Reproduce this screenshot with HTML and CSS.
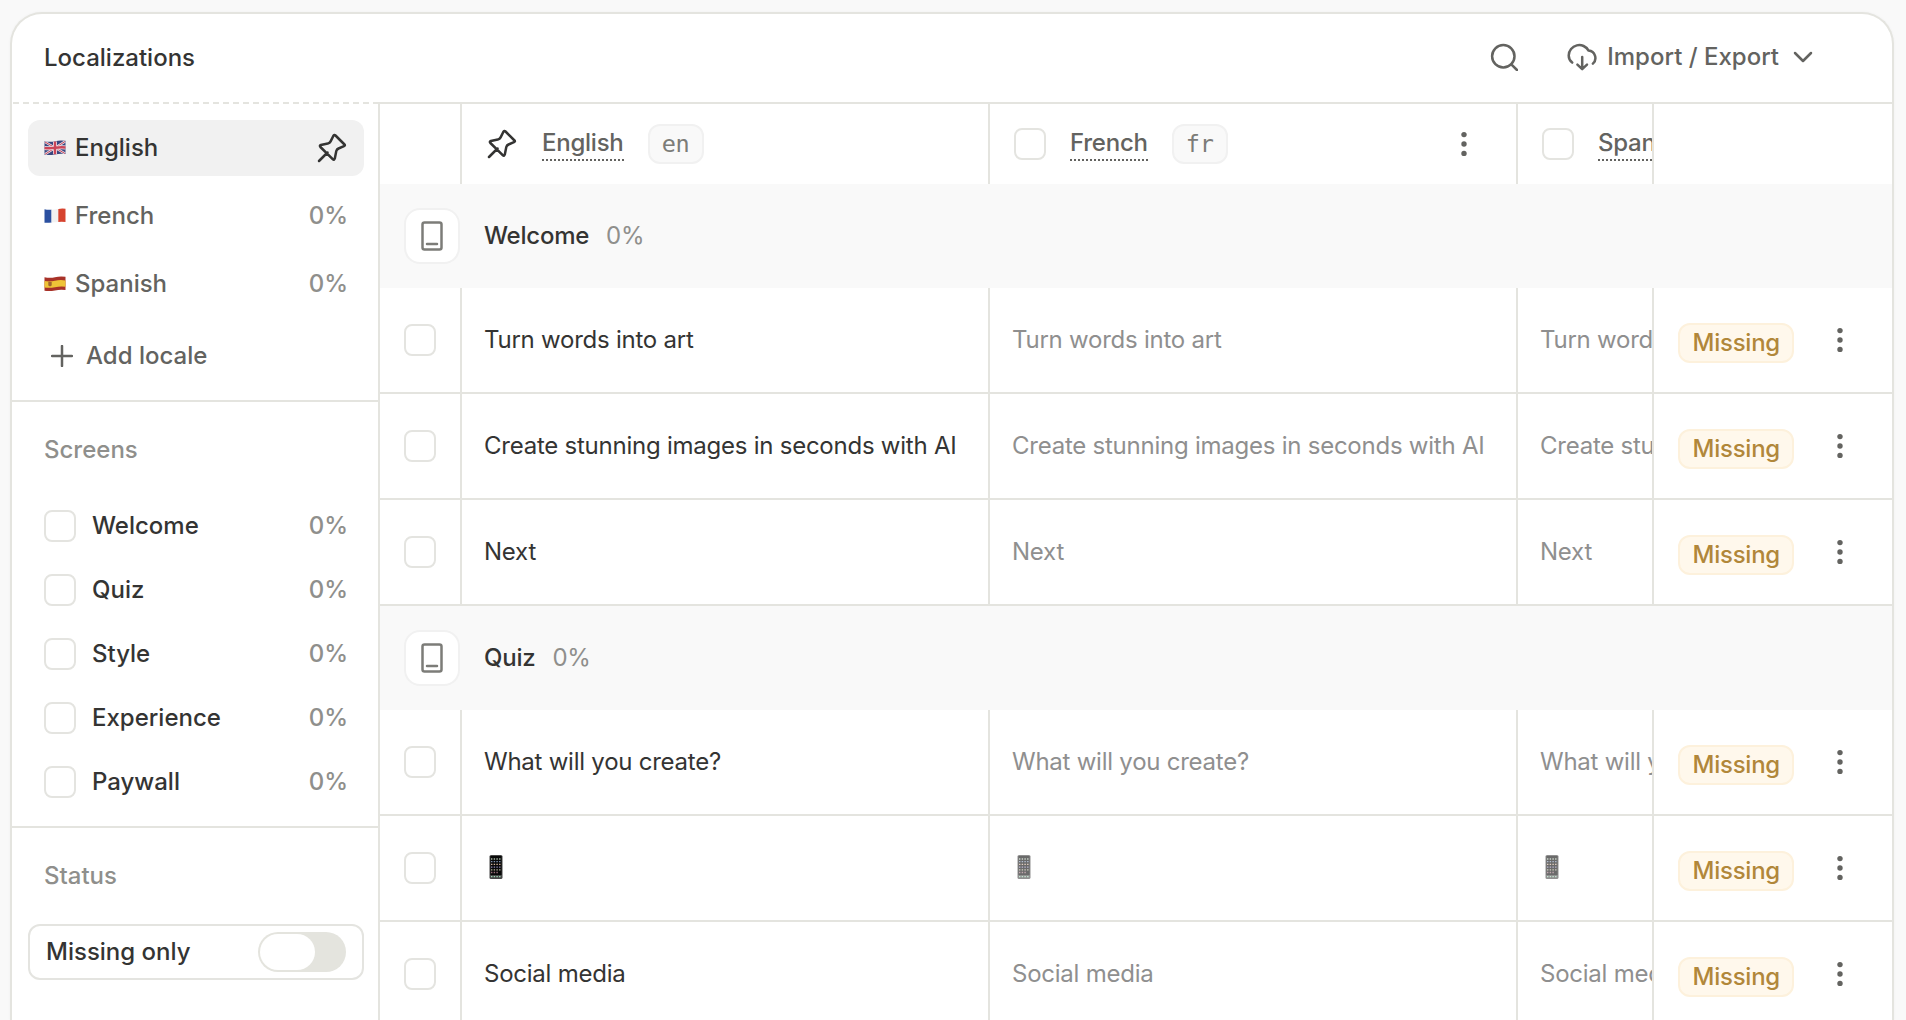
FILE: index.html
```html
<!DOCTYPE html>
<html lang="en">
<head>
<meta charset="UTF-8" />
<meta name="viewport" content="width=device-width, initial-scale=1" />
<title>Localizations</title>
<link rel="stylesheet" href="styles.css">
</head>
<body>

<!-- icons used more than once -->
<svg class="sprite">
  <symbol id="pin" viewBox="0 0 30 30">
    <path d="M2 28 L10.5 19.5 M18.5 2.5 L27.5 11.5 Q28.5 12.5 27 13.2 L21.5 15.5 Q19.8 16.3 19.3 18 L17.8 25.5 Q17.2 27.6 15.7 26.1 L3.4 14 Q2.2 12.6 3.8 12 L10.8 10.6 Q12.8 10.1 13.6 8.4 L16.3 3 Q17.3 1.3 18.5 2.5 Z"/>
  </symbol>
  <symbol id="device" viewBox="0 0 22 30">
    <rect x="1.5" y="1.5" width="19" height="27" rx="2"/>
    <path d="M6 23h10"/>
  </symbol>
  <symbol id="dots" viewBox="0 0 6 26">
    <circle cx="3" cy="3.6" r="2.7"/><circle cx="3" cy="13" r="2.7"/><circle cx="3" cy="22.4" r="2.7"/>
  </symbol>
  <symbol id="phone" viewBox="0 0 14 24">
    <rect x="0.5" y="0" width="13" height="24" rx="1.6" fill="#474747"/>
    <rect x="1.4" y="1" width="11.2" height="19" fill="#080808"/>
    <g fill="none" stroke-width="1.3" stroke-dasharray="1.4 1.3">
      <path d="M2 4h10" stroke="#a8b9a6"/>
      <path d="M2 6.7h10" stroke="#7f93b4"/>
      <path d="M2 9.4h10" stroke="#d5b49c"/>
      <path d="M2 12.1h10" stroke="#8d86b5"/>
      <path d="M2 14.8h10" stroke="#b5b49a"/>
      <path d="M2 17.5h7.5" stroke="#9c6f7d"/>
      <path d="M2 21.7h10" stroke="#9fd7b5"/>
    </g>
  </symbol>
</svg>

<div class="panel">
  <header class="topbar">
    <h1>Localizations</h1>
    <div class="actions">
      <button class="search">
        <svg class="icon" width="28" height="28" viewBox="0 0 28 28"><circle cx="13.3" cy="13.2" r="11.2"/><path d="M21.3 21.3 L27 27"/></svg>
      </button>
      <button class="export">
        <svg class="icon" width="30" height="28" viewBox="0 0 30 28">
          <path d="M5.2 19.6 A9 9 0 0 1 1.7 12.4 A10.6 10.6 0 0 1 21.6 7.6 A7.5 7.5 0 0 1 25.9 20.6"/>
          <path d="M15.2 14v11.5 M10.4 21.6l4.8 4.6 4.8-4.6"/>
        </svg>
        Import / Export
        <svg class="icon chevron" width="20" height="12" viewBox="0 0 20 12"><path d="M2 2l8 8 8-8"/></svg>
      </button>
    </div>
  </header>

  <div class="content">
    <aside class="sidebar">
      <section class="locales">
        <div class="locale selected">
          <svg class="flag" width="22" height="16" viewBox="0 0 22 16">
            <path d="M0.5 1.2Q6 2.4 11 1.2T21.5 0.8V14Q16 13.4 11 14.4T0.5 14.8Z" fill="#39467f"/>
            <path d="M1 2L21 13.5M21 1.5L1 14.3" stroke="#e6e3ea" stroke-width="2.4"/>
            <path d="M1 2L21 13.5M21 1.5L1 14.3" stroke="#c9455a" stroke-width="1"/>
            <path d="M11 1.4V14.3M0.5 8Q6 8.6 11 7.8T21.5 7.4" stroke="#efeaef" stroke-width="4" fill="none"/>
            <path d="M11 1.4V14.3M0.5 8Q6 8.6 11 7.8T21.5 7.4" stroke="#cb4558" stroke-width="2.5" fill="none"/>
          </svg>
          <span class="name">English</span>
          <svg class="icon pin" width="30" height="30"><use href="#pin"/></svg>
        </div>
        <div class="locale">
          <svg class="flag" width="22" height="16" viewBox="0 0 22 16">
            <path d="M0.5 1.2Q4 2.2 7.6 1.7V14.6Q4 15 0.5 14.8Z" fill="#2b50a0"/>
            <path d="M7.5 1.7Q11 1.4 14.3 0.9V13.9Q11 14.2 7.5 14.6Z" fill="#f1f1f1"/>
            <path d="M14.3 0.9Q18 0.4 21.5 0.8V14Q18 13.5 14.3 13.9Z" fill="#d6432f"/>
          </svg>
          <span class="name">French</span>
          <span class="percent">0%</span>
        </div>
        <div class="locale">
          <svg class="flag" width="22" height="16" viewBox="0 0 22 16">
            <path d="M0.5 1.2Q6 2.4 11 1.2T21.5 0.8V14Q16 13.4 11 14.4T0.5 14.8Z" fill="#a83228"/>
            <path d="M0.5 5Q6 6 11 4.8T21.5 4.5V10.8Q16 10.2 11 11.2T0.5 11.6Z" fill="#efc437"/>
            <path d="M4.3 6h3.4v3.6q-1.7 1.6-3.4 0z" fill="#a2662f"/>
          </svg>
          <span class="name">Spanish</span>
          <span class="percent">0%</span>
        </div>
        <button class="add-locale">
          <svg class="icon" width="22" height="22" viewBox="0 0 22 22"><path d="M11 1v20M1 11h20"/></svg>
          Add locale
        </button>
      </section>

      <section class="screens">
        <h2>Screens</h2>
        <div class="screen"><span class="checkbox"></span><span class="name">Welcome</span><span class="percent">0%</span></div>
        <div class="screen"><span class="checkbox"></span><span class="name">Quiz</span><span class="percent">0%</span></div>
        <div class="screen"><span class="checkbox"></span><span class="name">Style</span><span class="percent">0%</span></div>
        <div class="screen"><span class="checkbox"></span><span class="name">Experience</span><span class="percent">0%</span></div>
        <div class="screen"><span class="checkbox"></span><span class="name">Paywall</span><span class="percent">0%</span></div>
      </section>

      <section class="status">
        <h2>Status</h2>
        <div class="missing-only">
          <span class="name">Missing only</span>
          <span class="toggle"><span class="knob"></span></span>
        </div>
      </section>
    </aside>

    <main class="table">
      <div class="row head">
        <div class="cell"></div>
        <div class="cell">
          <svg class="icon pin" width="30" height="30"><use href="#pin"/></svg>
          <span class="lang">English</span><span class="code">en</span>
        </div>
        <div class="cell">
          <span class="checkbox"></span>
          <span class="lang">French</span><span class="code">fr</span>
          <svg class="dots" width="6" height="26"><use href="#dots"/></svg>
        </div>
        <div class="cell last">
          <span class="checkbox"></span>
          <span class="lang">Spanish</span>
        </div>
        <div class="cell side"></div>
      </div>

      <div class="group">
        <span class="device"><svg class="icon" width="22" height="30"><use href="#device"/></svg></span>
        <strong>Welcome</strong><span class="percent">0%</span>
      </div>
      <div class="row">
        <div class="cell"><span class="checkbox"></span></div>
        <div class="cell source">Turn words into art</div>
        <div class="cell">Turn words into art</div>
        <div class="cell last">Turn words into art</div>
        <div class="cell side"><span class="badge">Missing</span><svg class="dots" width="6" height="26"><use href="#dots"/></svg></div>
      </div>
      <div class="row">
        <div class="cell"><span class="checkbox"></span></div>
        <div class="cell source">Create stunning images in seconds with AI</div>
        <div class="cell">Create stunning images in seconds with AI</div>
        <div class="cell last">Create stunning images in seconds with AI</div>
        <div class="cell side"><span class="badge">Missing</span><svg class="dots" width="6" height="26"><use href="#dots"/></svg></div>
      </div>
      <div class="row">
        <div class="cell"><span class="checkbox"></span></div>
        <div class="cell source">Next</div>
        <div class="cell">Next</div>
        <div class="cell last">Next</div>
        <div class="cell side"><span class="badge">Missing</span><svg class="dots" width="6" height="26"><use href="#dots"/></svg></div>
      </div>

      <div class="group">
        <span class="device"><svg class="icon" width="22" height="30"><use href="#device"/></svg></span>
        <strong>Quiz</strong><span class="percent">0%</span>
      </div>
      <div class="row">
        <div class="cell"><span class="checkbox"></span></div>
        <div class="cell source">What will you create?</div>
        <div class="cell">What will you create?</div>
        <div class="cell last">What will you create?</div>
        <div class="cell side"><span class="badge">Missing</span><svg class="dots" width="6" height="26"><use href="#dots"/></svg></div>
      </div>
      <div class="row">
        <div class="cell"><span class="checkbox"></span></div>
        <div class="cell source"><svg class="phone" width="14" height="24"><use href="#phone"/></svg></div>
        <div class="cell"><svg class="phone" width="14" height="24"><use href="#phone"/></svg></div>
        <div class="cell last"><svg class="phone" width="14" height="24"><use href="#phone"/></svg></div>
        <div class="cell side"><span class="badge">Missing</span><svg class="dots" width="6" height="26"><use href="#dots"/></svg></div>
      </div>
      <div class="row">
        <div class="cell"><span class="checkbox"></span></div>
        <div class="cell source">Social media</div>
        <div class="cell">Social media</div>
        <div class="cell last">Social media</div>
        <div class="cell side"><span class="badge">Missing</span><svg class="dots" width="6" height="26"><use href="#dots"/></svg></div>
      </div>
    </main>
  </div>
</div>

</body>
</html>
```

FILE: styles.css
```css
* {
  box-sizing: border-box;
}
body {
  margin: 0;
  padding: 12px 12px 0 10px;
  height: 100vh;
  overflow: hidden;
  background: #f9f9f9;
  color: #343433;
  font-family: Inter, "Liberation Sans", sans-serif;
  font-size: 24px;
  line-height: 32px;
}
h1, h2 {
  margin: 0;
  font-size: 24px;
  font-weight: 500;
}
h2 {
  color: #8f8f8c;
}
button {
  display: flex;
  align-items: center;
  padding: 0;
  border: none;
  background: none;
  color: #636360;
  font: inherit;
  font-weight: 500;
  cursor: pointer;
}
.sprite {
  display: none;
}
.icon {
  flex: none;
  fill: none;
  stroke: currentColor;
  stroke-width: 2.5;
  stroke-linecap: round;
  stroke-linejoin: round;
}
.pin {
  color: #343433;
}
.dots {
  flex: none;
  fill: #636360;
}
.percent {
  color: #8f8f8c;
}
.checkbox {
  flex: none;
  width: 32px;
  height: 32px;
  border: 2px solid #e4e4e0;
  border-radius: 8px;
  background: #fff;
}

.panel {
  height: 100%;
  border: 2px solid #e4e4df;
  border-bottom: none;
  border-radius: 32px 32px 0 0;
  background: #fff;
  box-shadow: 0 0 3px rgba(0, 0, 0, 0.04);
  overflow: hidden;
}

/* Top bar */
.topbar {
  display: flex;
  align-items: center;
  justify-content: space-between;
  height: 88px;
  padding: 0 79px 0 32px;
}
.actions {
  display: flex;
  align-items: center;
  gap: 49px;
  padding-bottom: 3px;
}
.export {
  gap: 10px;
}
.export .chevron {
  margin-left: 4px;
}

.content {
  display: flex;
}

/* Sidebar */
.sidebar {
  flex: none;
  width: 368px;
  height: 918px;
  border-right: 2px solid #e4e4df;
  font-weight: 500;
}
.sidebar section {
  padding: 0 14px 0 16px;
  border-bottom: 2px solid #e4e4df;
}
.sidebar .name {
  flex: 1;
}
.sidebar .locales {
  height: 300px;
  padding-top: 18px;
  background: repeating-linear-gradient(90deg, #e4e4df 0 6px, #fff 6px 10px) 1px 0 / 100% 2px no-repeat;
}
.locale {
  display: flex;
  align-items: center;
  height: 56px;
  margin-bottom: 12px;
  padding: 0 17px 0 16px;
  border-radius: 12px;
  color: #636360;
}
.locale.selected {
  background: #f1f1f1;
  color: #343433;
}
.flag {
  margin-right: 9px;
}
.locale .percent {
  margin-right: -1px;
}
.add-locale {
  gap: 13px;
  height: 56px;
  margin-top: 16px;
  padding-left: 23px;
}
.sidebar .screens {
  height: 426px;
  padding-top: 32px;
}
.sidebar h2 {
  padding-left: 16px;
}
.screens h2 {
  margin-bottom: 28px;
}
.screen {
  display: flex;
  align-items: center;
  gap: 16px;
  height: 64px;
  padding: 0 16px;
}
.sidebar .status {
  padding-top: 32px;
  border-bottom: none;
}
.missing-only {
  display: flex;
  align-items: center;
  height: 56px;
  margin-top: 32px;
  padding: 0 16px;
  border: 2px solid #e4e4e0;
  border-radius: 12px;
}
.toggle {
  width: 88px;
  height: 40px;
  padding: 2px;
  border-radius: 20px;
  background: #e4e4de;
}
.knob {
  display: block;
  width: 55px;
  height: 36px;
  border-radius: 18px;
  background: #fff;
}

/* Table */
.table {
  flex: 1;
  border-top: 2px solid #e4e4df;
  letter-spacing: -0.01em;
}
.row {
  display: grid;
  grid-template-columns: 82px 528px 528px 134px 240px;
  height: 106px;
  border-bottom: 2px solid #e4e4df;
  color: #8f8f8f;
}
.cell {
  display: flex;
  align-items: center;
  padding: 0 22px;
  border-right: 2px solid #e4e4df;
  white-space: nowrap;
  overflow: hidden;
}
.cell:first-child {
  padding-left: 24px;
}
.cell.last {
  border-right: none;
}
.cell.side {
  border-right: none;
  border-left: 2px solid #e4e4df;
  padding: 0 49px 0 24px;
  justify-content: space-between;
}
.source {
  color: #343433;
}
.badge {
  height: 40px;
  margin-top: 6px;
  padding: 0 12.5px;
  border: 2px solid #fdf1dc;
  border-radius: 12px;
  background: #fff8ec;
  color: #b1873a;
  font-weight: 500;
  line-height: 36px;
}
.phone {
  margin: 0 0 2px 5px;
}
.cell:not(.source) .phone {
  opacity: 0.6;
}

.head {
  height: 80px;
  border-bottom: none;
  color: #636360;
  font-weight: 500;
}
.head .cell {
  padding-left: 24px;
}
.head .pin {
  margin: 0 1px;
}
.lang {
  margin-left: 24px;
  border-bottom: 2px dotted #636360;
}
.code {
  width: 56px;
  height: 40px;
  margin-left: 24px;
  border: 2px solid #f1f1f1;
  border-radius: 12px;
  background: #f9f9f9;
  color: #7c7c78;
  font-family: "DejaVu Sans Mono", monospace;
  font-size: 23.5px;
  font-weight: 400;
  line-height: 36px;
  text-align: center;
}
.head .dots {
  margin: 0 27px 0 auto;
}

.group {
  display: flex;
  align-items: center;
  height: 104px;
  padding-left: 24px;
  background: #f9f9f9;
}
.group strong {
  margin: 0 17px 0 24px;
  font-weight: 500;
}
.device {
  display: flex;
  align-items: center;
  justify-content: center;
  width: 56px;
  height: 56px;
  border: 2px solid #f1f1f1;
  border-radius: 16px;
  background: #fff;
  color: #7c7c78;
}
```
